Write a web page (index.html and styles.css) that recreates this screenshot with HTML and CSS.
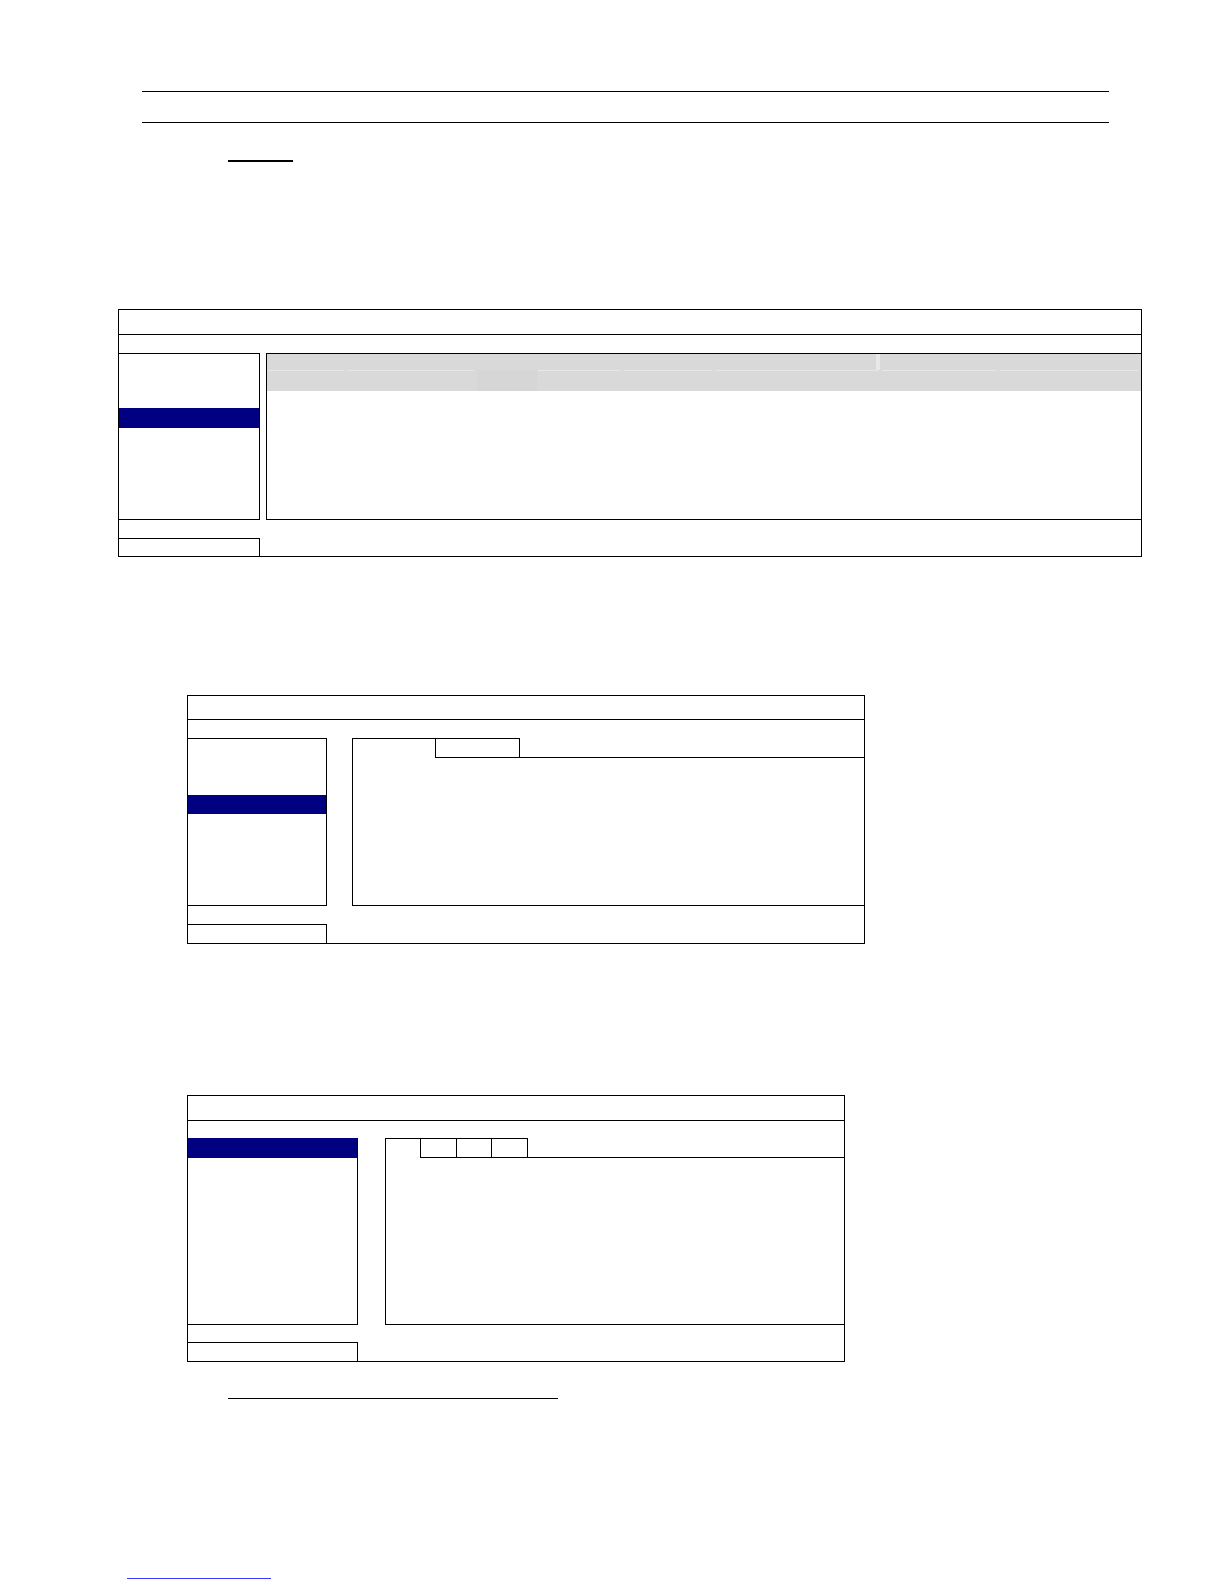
FILE: index.html
```html
<!DOCTYPE html>
<html>
<head>
<meta charset="utf-8">
<title>Menu</title>
<link rel="stylesheet" href="styles.css">
</head>
<body>
<div class="doc">
  <div class="hr hr1"></div>
  <div class="hr hr2"></div>
  <div class="ul1"></div>

  <div class="win win1">
    <div class="title"></div>
    <div class="bar"></div>
    <div class="body">
      <div class="list"><div class="sel"></div></div>
      <div class="gap"></div>
      <div class="panel">
        <div class="hdr">
          <div class="hcol c1"><div class="htop"></div><div class="sep"></div></div>
          <div class="hcol c2"><div class="htop"></div><div class="sep"></div></div>
          <div class="hcol c3 dark"><div class="htop"></div><div class="sep none"></div></div>
          <div class="hcol c4"><div class="htop"></div><div class="sep"></div></div>
          <div class="hcol c5"><div class="htop"></div><div class="sep"></div></div>
          <div class="hcol c6"><div class="htop vline"></div><div class="sep"></div></div>
          <div class="hcol c7"><div class="htop"></div><div class="sep"></div></div>
          <div class="hcol c8"><div class="htop"></div><div class="sep"></div></div>
        </div>
      </div>
    </div>
    <div class="spacer"></div>
    <div class="foot"><div class="fbox"></div></div>
  </div>

  <div class="win win2">
    <div class="title"></div>
    <div class="bar"></div>
    <div class="body">
      <div class="list"><div class="sel"></div></div>
      <div class="gap"></div>
      <div class="panel tabbed">
        <div class="tabs">
          <div class="tab-lead"></div>
          <div class="tab last"></div>
          <div class="tab-rest"></div>
        </div>
        <div class="content"></div>
      </div>
    </div>
    <div class="spacer"></div>
    <div class="foot"><div class="fbox"></div></div>
  </div>

  <div class="win win3">
    <div class="title"></div>
    <div class="bar"></div>
    <div class="body">
      <div class="list"><div class="sel"></div></div>
      <div class="gap"></div>
      <div class="panel tabbed">
        <div class="tabs">
          <div class="tab-lead"></div>
          <div class="tab t1"></div>
          <div class="tab t2"></div>
          <div class="tab t3 last"></div>
          <div class="tab-rest"></div>
        </div>
        <div class="content"></div>
      </div>
    </div>
    <div class="spacer"></div>
    <div class="foot"><div class="fbox"></div></div>
  </div>

  <div class="ul2"></div>
  <div class="link-line"></div>
</div>
</body>
</html>
```

FILE: styles.css
```css
* { box-sizing: border-box; }
html, body { margin: 0; padding: 0; background: #ffffff; }
body { font-family: "Liberation Serif", serif; }
.doc { width: 1224px; height: 1584px; overflow: hidden; padding-top: 1px; }

.hr { margin-left: 142px; width: 967px; height: 1px; background: #000; }
.hr1 { margin-top: 90px; }
.hr2 { margin-top: 30px; }
.ul1 { margin-top: 37px; margin-left: 228px; width: 65px; height: 2px; background: #000; }

.win { border: 1px solid #000; display: flex; flex-direction: column; background: #fff; }
.win .title { border-bottom: 1px solid #000; }
.win .body { display: flex; }
.win .list { border-top: 1px solid #000; border-right: 1px solid #000; border-bottom: 1px solid #000; flex: none; }
.win .sel { background: #000080; }
.win .gap { flex: none; }
.win .panel { flex: 1; border-left: 1px solid #000; }
.win .foot { display: flex; }
.win .fbox { border-top: 1px solid #000; border-right: 1px solid #000; height: 100%; }

/* window 1 */
.win1 { margin-top: 147px; margin-left: 118px; width: 1024px; height: 248px; }
.win1 .title { height: 25px; }
.win1 .bar { height: 18px; }
.win1 .body { height: 167px; }
.win1 .list { width: 141px; }
.win1 .sel { margin-top: 54px; height: 20px; }
.win1 .gap { width: 6px; }
.win1 .panel { border-top: 1px solid #000; border-bottom: 1px solid #000; }
.win1 .spacer { height: 18px; }
.win1 .foot { height: 18px; }
.win1 .fbox { width: 141px; }

.hdr { display: flex; height: 37px; background: #d9d9d9; }
.hcol { display: flex; flex-direction: column; flex: none; }
.htop { height: 16px; }
.sep { height: 1px; background: #e8e8e8; margin: 0 3px 0 1px; }
.sep.none { background: transparent; }
.hcol.dark { background: #d6d6d6; }
.hcol.dark .htop { background: #d9d9d9; }
.vline { border-right: 1px solid #e8e8e8; box-shadow: 3px 0 0 #e8e8e8; margin-right: 4px; }
.c1 { width: 80px; }
.c2 { width: 130px; }
.c3 { width: 60px; }
.c4 { width: 86px; }
.c5 { width: 92px; }
.c6 { width: 166px; }
.c7 { width: 118px; }
.c8 { flex: 1; }

/* tabbed panels */
.tabbed { display: flex; flex-direction: column; border-left: none !important; }
.tabs { display: flex; height: 20px; flex: none; }
.tab-lead { border-left: 1px solid #000; border-top: 1px solid #000; flex: none; }
.tab { border-top: 1px solid #000; border-bottom: 1px solid #000; border-left: 1px solid #000; flex: none; }
.tab.last { border-right: 1px solid #000; }
.tab-rest { flex: 1; border-bottom: 1px solid #000; }
.content { flex: 1; border-left: 1px solid #000; border-bottom: 1px solid #000; }

/* window 2 */
.win2 { margin-top: 138px; margin-left: 187px; width: 678px; height: 249px; }
.win2 .title { height: 24px; }
.win2 .bar { height: 18px; }
.win2 .body { height: 168px; }
.win2 .list { width: 139px; }
.win2 .sel { margin-top: 56px; height: 19px; }
.win2 .gap { width: 25px; }
.win2 .tab-lead { width: 83px; }
.win2 .tab { width: 85px; }
.win2 .spacer { height: 18px; }
.win2 .foot { height: 19px; }
.win2 .fbox { width: 139px; }

/* window 3 */
.win3 { margin-top: 151px; margin-left: 187px; width: 658px; height: 267px; }
.win3 .title { height: 25px; }
.win3 .bar { height: 17px; }
.win3 .body { height: 187px; }
.win3 .list { width: 170px; }
.win3 .sel { margin-top: -1px; height: 20px; }
.win3 .gap { width: 27px; }
.win3 .tab-lead { width: 35px; }
.win3 .t1 { width: 36px; }
.win3 .t2 { width: 35px; }
.win3 .t3 { width: 37px; }
.win3 .spacer { height: 17px; }
.win3 .foot { height: 19px; }
.win3 .fbox { width: 170px; }

.ul2 { margin-top: 36px; margin-left: 228px; width: 330px; height: 1px; background: #000; }
.link-line { margin-top: 179px; margin-left: 127px; width: 144px; height: 1px; background: #3a3aff; }
```
